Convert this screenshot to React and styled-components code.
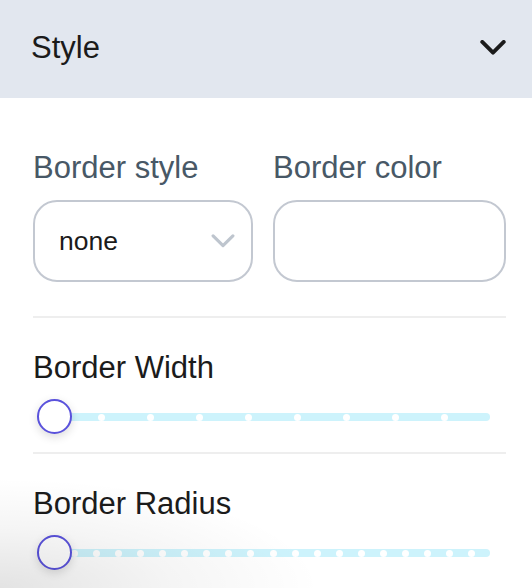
import React from 'react';
import styled, { createGlobalStyle } from 'styled-components';

const GlobalStyle = createGlobalStyle`
  * {
    box-sizing: border-box;
  }
  body {
    margin: 0;
    background: #fff;
  }
`;

const Panel = styled.div`
  position: relative;
  width: 532px;
  height: 588px;
  overflow: hidden;
  background: #fff;
  font-family: "Liberation Sans", Helvetica, sans-serif;
`;

const Header = styled.div`
  display: flex;
  align-items: center;
  justify-content: space-between;
  height: 98px;
  padding: 0 26px 2px 31px;
  background: #e2e7ef;
`;

const Title = styled.span`
  color: #1b1b1b;
  font-size: 31px;
  line-height: 34px;
`;

const Body = styled.div`
  display: flex;
  flex-direction: column;
  padding: 52px 26px 0 33px;
`;

const Row = styled.div`
  display: grid;
  grid-template-columns: 220px 1fr;
  gap: 20px;
  padding-bottom: 34px;
  border-bottom: 2px solid #eeeeee;
`;

const Field = styled.div`
  display: flex;
  flex-direction: column;
  gap: 15px;
`;

const Label = styled.span`
  color: ${({ $muted }) => ($muted ? '#485866' : '#1b1b1b')};
  font-size: 31px;
  line-height: 35px;
  white-space: nowrap;
`;

const Box = styled.div`
  display: flex;
  align-items: center;
  justify-content: space-between;
  height: 82px;
  padding: 0 16px 0 24px;
  border: 2px solid #c3c8d1;
  border-radius: 24px;
  background: #fff;
  color: #1b1b1b;
  font-size: 26.5px;
`;

const Section = styled.div`
  display: flex;
  flex-direction: column;
  gap: 14px;
  padding: 32px 0 18px;
  border-bottom: ${({ $last }) => ($last ? 'none' : '2px solid #eeeeee')};
`;

const Slider = styled.div`
  position: relative;
  height: 35px;
  width: 457px;
`;

const Track = styled.div`
  position: absolute;
  left: 4px;
  right: 0;
  top: 14px;
  height: 8px;
  border-radius: 4px;
  background: #cdf3fc;
`;

const Tick = styled.span`
  position: absolute;
  top: 14px;
  width: 7px;
  height: 7px;
  margin-left: -3.5px;
  margin-top: 0.5px;
  border-radius: 50%;
  background: #fff;
`;

const Thumb = styled.div`
  position: absolute;
  left: 4px;
  top: 0;
  width: 35px;
  height: 35px;
  border-radius: 50%;
  border: 2.5px solid #5a52dc;
  background: #fff;
  box-shadow: 0 3px 10px rgba(0, 0, 0, 0.14);
`;

const Shade = styled.div`
  position: absolute;
  left: 0;
  bottom: 0;
  width: 532px;
  height: 160px;
  pointer-events: none;
  background: radial-gradient(
    ellipse 320px 110px at 0% 100%,
    rgba(0, 0, 0, 0.11),
    rgba(0, 0, 0, 0.04) 55%,
    rgba(0, 0, 0, 0) 100%
  );
`;

const Chevron = ({ color, size, stroke }) => (
  <svg width={size} height={size * 0.6} viewBox='0 0 26 16' fill='none'>
    <path
      d='M2 2 L13 13 L24 2'
      stroke={color}
      strokeWidth={stroke}
      strokeLinecap='round'
      strokeLinejoin='round'
    />
  </svg>
);

const RangeSlider = ({ steps }) => {
  // ticks sit on a scale that runs from x=52 to x=494 of the page
  const start = 19;
  const span = 442;
  const ticks = [];
  for (let k = 1; k < steps; k++) {
    ticks.push(start + (span * k) / steps);
  }
  return (
    <Slider>
      <Track />
      {ticks.map((x) => (
        <Tick key={x} style={{ left: x }} />
      ))}
      <Thumb />
    </Slider>
  );
};

const App = () => (
  <Panel>
    <GlobalStyle />
    <Header>
      <Title>Style</Title>
      <Chevron color='#1b1b1b' size={26} stroke={4} />
    </Header>
    <Body>
      <Row>
        <Field>
          <Label $muted>Border style</Label>
          <Box>
            <span>none</span>
            <Chevron color='#bec5ce' size={24} stroke={3.5} />
          </Box>
        </Field>
        <Field>
          <Label $muted>Border color</Label>
          <Box />
        </Field>
      </Row>
      <Section>
        <Label>Border Width</Label>
        <RangeSlider steps={9} />
      </Section>
      <Section $last>
        <Label>Border Radius</Label>
        <RangeSlider steps={20} />
      </Section>
    </Body>
    <Shade />
  </Panel>
);

export default App;
